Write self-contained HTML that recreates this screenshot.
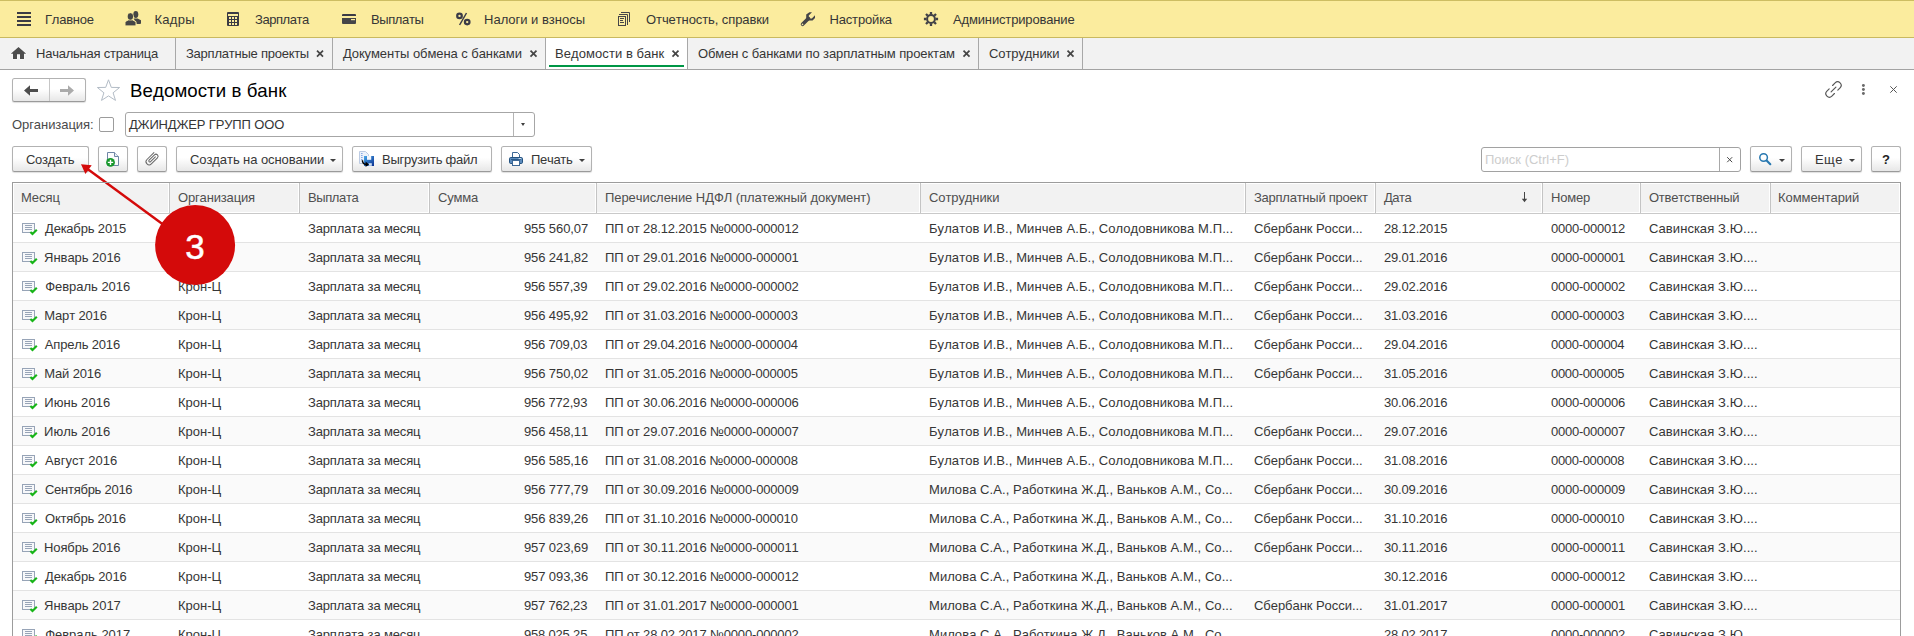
<!DOCTYPE html>
<html lang="ru"><head><meta charset="utf-8"><title>Ведомости в банк</title>
<style>
html,body{margin:0;padding:0;background:#fff;}
body{font-kerning:none;width:1914px;height:636px;overflow:hidden;font-family:"Liberation Sans",sans-serif;font-size:13px;color:#333;}
#app{position:relative;width:1914px;height:636px;overflow:hidden;background:#fff;}
.t{position:absolute;white-space:nowrap;font-size:13px;line-height:15px;color:#363636;}
svg{position:absolute;display:block;overflow:visible;}
/* top bar */
#topbar{position:absolute;left:0;top:0;width:1914px;height:38px;background:#fbec9e;box-sizing:border-box;border-top:1px solid #cdbd62;border-bottom:1px solid #c9b960;}

/* tabs */
#tabbar{position:absolute;left:0;top:38px;width:1914px;height:32px;background:#f2f2f2;box-sizing:border-box;border-bottom:1px solid #a3a3a3;}
.tsep{position:absolute;top:0;width:1px;height:31px;background:#a8a8a8;}
#tabact{position:absolute;left:546px;top:0;width:141px;height:31px;background:#fff;}
#tabline{position:absolute;left:549px;top:27px;width:135px;height:2px;background:#009646;}
.tx{position:absolute;width:7px;height:7px;}
/* buttons */
.btn{position:absolute;box-sizing:border-box;height:26px;border:1px solid #b2b2b2;border-bottom-color:#9a9a9a;border-radius:2.5px;background:linear-gradient(#ffffff 0%,#ffffff 45%,#e7e7e7 100%);box-shadow:0 1px 1px rgba(0,0,0,.13);}
.inp{position:absolute;box-sizing:border-box;border:1px solid #a6a6a6;border-radius:3px;background:#fff;}
.tri{position:absolute;width:0;height:0;border-left:3px solid transparent;border-right:3px solid transparent;border-top:3px solid #3f3f3f;}
/* grid */
#grid{position:absolute;left:12px;top:182px;width:1889px;height:454px;background:#fff;overflow:hidden;}
#gbl,#gbr{position:absolute;top:0;width:1px;height:454px;background:#9c9c9c;z-index:3;}
#gbl{left:0}#gbr{left:1888px}
#gbt{position:absolute;left:0;top:0;width:1889px;height:1px;background:#9c9c9c;z-index:3;}
#ghl{position:absolute;left:1px;top:31px;width:1887px;height:1px;background:#c9c9c9;}
#ghead{position:absolute;left:2px;top:2px;width:1885px;height:28px;background:#f2f2f2;}
#grid .hsep{position:absolute;top:1px;width:2px;height:30px;background:linear-gradient(90deg,#ffffff 50%,#c4c4c4 50%);}
.hd{color:#4f4f4f;}
.row{position:absolute;left:0;width:1889px;height:28px;border-bottom:1px solid #e3e3e3;background:#fff;}
.row.alt{background:#fafafa;}


</style></head><body>
<div id="app">
<div id="topbar"></div>
<!-- hamburger -->
<svg style="left:17px;top:12px" width="14" height="14" viewBox="17 12 14 14"><path d="M17 13h14M17 17h14M17 21h14M17 25h14" stroke="#3b3b45" stroke-width="2"/></svg>
<!-- people -->
<svg style="left:122px;top:9px" width="22" height="20" viewBox="122 9 22 20">
<ellipse cx="135.8" cy="14.5" rx="2.5" ry="3.4" fill="#454545"/>
<path d="M133.6 18.4L137.6 18.4L141 20.2L141 23Q141 23.9 140.1 23.9L136.6 23.9Z" fill="#454545"/>
<ellipse cx="130.4" cy="16.5" rx="2.7" ry="3.4" fill="#454545" stroke="#fbec9e" stroke-width="1"/>
<path d="M128.2 19.9L132.6 19.9L136 21.7L136 25Q136 25.9 135.1 25.9L125.9 25.9Q125 25.9 125 25L125 21.7Z" fill="#454545" stroke="#fbec9e" stroke-width="1"/>
<ellipse cx="130.4" cy="16.5" rx="2.6" ry="3.3" fill="#454545"/>
</svg>
<!-- calculator -->
<svg style="left:227px;top:12px" width="12" height="14" viewBox="227 12 12 14"><rect x="227" y="12" width="12" height="14" rx="1" fill="#3b3b45"/><rect x="228" y="14" width="10" height="2" fill="#fbec9e"/>
<g fill="#fbec9e"><rect x="229" y="17" width="2" height="2"/><rect x="232" y="17" width="2" height="2"/><rect x="235" y="17" width="2" height="2"/><rect x="229" y="20" width="2" height="2"/><rect x="232" y="20" width="2" height="2"/><rect x="235" y="20" width="2" height="2"/><rect x="229" y="23" width="2" height="2"/><rect x="232" y="23" width="2" height="2"/><rect x="235" y="23" width="2" height="2"/></g></svg>
<!-- card -->
<svg style="left:342px;top:14px" width="14" height="10" viewBox="342 14 14 10"><path d="M342 16V15Q342 14 343 14H355Q356 14 356 15V16Z" fill="#3b3b45"/><path d="M342 18H356V23Q356 24 355 24H343Q342 24 342 23Z" fill="#454548"/><rect x="351" y="19" width="4" height="1.2" fill="#fbec9e"/></svg>
<!-- percent -->
<svg style="left:455px;top:12px" width="16" height="14" viewBox="455 12 16 14"><g fill="none" stroke="#3b3b47"><ellipse cx="459.5" cy="15.9" rx="2.3" ry="2.2" stroke-width="2.2"/><ellipse cx="467.2" cy="22.1" rx="2.3" ry="2.2" stroke-width="2.2"/><path d="M466.5 13L459.6 25" stroke-width="1.5"/></g></svg>
<!-- documents -->
<svg style="left:617px;top:11px" width="15" height="16" viewBox="617 11 15 16"><g fill="none" stroke="#454548" stroke-width="1"><rect x="618.5" y="16.5" width="7" height="9"/><path d="M620 18.5H624M620 20.5H623M620 22.5H624"/><path d="M619 14.5H627.5V25"/><path d="M621 12.5H629.5V22"/></g></svg>
<!-- wrench -->
<svg style="left:799px;top:10px" width="18" height="18" viewBox="799 10 18 18"><path d="M802.6 24.3L808.4 18.5" stroke="#454548" stroke-width="3.7" stroke-linecap="round" fill="none"/><path d="M806.2 19.8L806.2 14.6L809.4 12.2L812 12.2L808.8 15.4L808.8 17L810.2 18.4L811.8 18.4L815 15.2L815 18L812.6 20.6L808 20.6Z" fill="#454548"/><circle cx="802.5" cy="24.4" r="0.8" fill="#fbec9e"/></svg>
<!-- gear -->
<svg style="left:922px;top:10px" width="18" height="18" viewBox="922 10 18 18"><g fill="none" stroke="#414147"><circle cx="931" cy="19" r="3.9" stroke-width="2"/><path d="M935.60 19.00L938.10 19.00M934.25 22.25L936.02 24.02M931.00 23.60L931.00 26.10M927.75 22.25L925.98 24.02M926.40 19.00L923.90 19.00M927.75 15.75L925.98 13.98M931.00 14.40L931.00 11.90M934.25 15.75L936.02 13.98" stroke-width="2.3"/></g></svg>
<span class="t" style="left:45.1px;top:12px;letter-spacing:-0.267px;">Главное</span>
<span class="t" style="left:154.46px;top:12px;letter-spacing:0.28px;">Кадры</span>
<span class="t" style="left:255px;top:12px;letter-spacing:-0.453px;">Зарплата</span>
<span class="t" style="left:371px;top:12px;letter-spacing:-0.398px;">Выплаты</span>
<span class="t" style="left:484.1px;top:12px;letter-spacing:-0.007px;">Налоги и взносы</span>
<span class="t" style="left:646px;top:12px;letter-spacing:-0.091px;">Отчетность, справки</span>
<span class="t" style="left:829.46px;top:12px;letter-spacing:-0.16px;">Настройка</span>
<span class="t" style="left:953px;top:12px;letter-spacing:-0.15px;">Администрирование</span>
<div id="tabbar">
<div id="tabact"></div><div id="tabline"></div>
<div class="tsep" style="left:175px"></div><div class="tsep" style="left:332px"></div><div class="tsep" style="left:545px"></div><div class="tsep" style="left:687px"></div><div class="tsep" style="left:978px"></div><div class="tsep" style="left:1082px"></div>
</div>
<!-- home -->
<svg style="left:9px;top:45px" width="19" height="16" viewBox="9 45 19 16"><path d="M18.5 47L26.2 53.8L24 53.8L24 59L20 59L20 54.2L17 54.2L17 59L13 59L13 53.8L10.8 53.8Z" fill="#4e4e4e" stroke="#fafafa" stroke-width="1.2" paint-order="stroke"/></svg>
<span class="t" style="left:36px;top:46px;letter-spacing:-0.229px;">Начальная страница</span>
<span class="t" style="left:186px;top:46px;letter-spacing:-0.235px;">Зарплатные проекты</span>
<span class="t" style="left:343px;top:46px;letter-spacing:-0.06px;">Документы обмена с банками</span>
<span class="t" style="left:555.1px;top:46px;letter-spacing:0.057px;">Ведомости в банк</span>
<span class="t" style="left:698px;top:46px;letter-spacing:-0.108px;">Обмен с банками по зарплатным проектам</span>
<span class="t" style="left:989px;top:46px;letter-spacing:-0.091px;">Сотрудники</span>
<svg style="left:0;top:38px" width="1100" height="32" viewBox="0 38 1100 32"><g stroke="#454545" stroke-width="1.7" fill="none">
<path d="M317 50.6l6 6m0-6l-6 6"/><path d="M530.5 50.6l6 6m0-6l-6 6"/><path d="M672.5 50.6l6 6m0-6l-6 6"/><path d="M963.5 50.6l6 6m0-6l-6 6"/><path d="M1067.5 50.6l6 6m0-6l-6 6"/></g></svg>
<!-- nav buttons -->
<div class="btn" style="left:12px;top:78px;width:74px;height:24px"></div>
<div style="position:absolute;left:49px;top:79px;width:1px;height:22px;background:#c6c6c6"></div>
<svg style="left:20px;top:82px" width="60" height="18" viewBox="20 82 60 18"><path d="M24 90.5L30 85.2V89H38V92H30V95.8Z" fill="#4d4d4d"/><path d="M74 90.5L68 85.2V89H60V92H68V95.8Z" fill="#ababab"/></svg>
<!-- star -->
<svg style="left:95px;top:77px" width="28" height="26" viewBox="95 77 28 26"><path d="M108.5 79.8L111.3 87.4L119.6 87.5L113.1 92.8L115.5 100.4L108.5 95.9L101.5 100.4L103.9 92.8L97.4 87.5L105.7 87.4Z" fill="#fff" stroke="#b3bcc6" stroke-width="1" stroke-linejoin="miter"/></svg>
<span class="t" id="title" style="left:130.1px;top:80px;letter-spacing:0.06px;font-size:18.67px;line-height:22px;color:#000;letter-spacing:0.057px;">Ведомости в банк</span>
<!-- title right icons -->
<svg style="left:1820px;top:78px" width="90" height="24" viewBox="1820 78 90 24">
<g transform="translate(1833.5 89.5) rotate(-45)" fill="none" stroke="#555" stroke-width="1.15" stroke-linecap="round"><path d="M2.2 -3.5H5.8A3.5 3.5 0 0 1 5.8 3.5H2.6"/><path d="M-2.2 3.5H-5.8A3.5 3.5 0 0 1 -5.8 -3.5H-2.6"/><path d="M-3.4 0H3.4"/></g>
<g fill="#6a6a6a"><circle cx="1863.4" cy="85.5" r="1.45"/><circle cx="1863.4" cy="89.5" r="1.45"/><circle cx="1863.4" cy="93.5" r="1.45"/></g>
<path d="M1890.3 86.3l6.4 6.4m0-6.4l-6.4 6.4" stroke="#555" stroke-width="1" fill="none"/>
</svg>
<!-- organisation row -->
<span class="t" style="left:12px;top:117px;color:#4a4a4a;letter-spacing:-0.071px;">Организация:</span>
<div class="inp" style="left:99px;top:117px;width:15px;height:15px;border-radius:2px;border-color:#9c9c9c"></div>
<div class="inp" style="left:125px;top:112px;width:410px;height:25px"></div>
<div style="position:absolute;left:513px;top:113px;width:1px;height:23px;background:#b4b4b4"></div>
<div class="tri" style="left:521px;top:123px;border-left-width:2.5px;border-right-width:2.5px"></div>
<span class="t" style="left:128.9px;top:117px;letter-spacing:-0.15px;">ДЖИНДЖЕР ГРУПП ООО</span>

<!-- toolbar -->
<div class="btn" style="left:12px;top:146px;width:77px"></div><span class="t" style="left:26px;top:152px;letter-spacing:-0.27px;">Создать</span>
<div class="btn" style="left:98px;top:146px;width:30px"></div>
<svg style="left:104px;top:150px" width="18" height="19" viewBox="104 150 18 19"><path d="M107.5 152.5H114.5L118.5 156.5V165.5H107.5Z" fill="#fbfcfd" stroke="#6f86a6" stroke-width="1"/><path d="M114.5 152.5V156.5H118.5" fill="#e9eef5" stroke="#6f86a6" stroke-width="1"/><circle cx="110.5" cy="162.4" r="4.4" fill="#16972b"/><path d="M110.5 159.7V165.1M107.8 162.4H113.2" stroke="#fff" stroke-width="1.4"/></svg>
<div class="btn" style="left:137px;top:146px;width:30px"></div>
<svg style="left:143px;top:149px" width="18" height="19" viewBox="143 149 18 19"><g transform="translate(152 158.6) rotate(-45)" fill="none" stroke="#666" stroke-width="1" stroke-linecap="round"><path d="M5.6 -2.9H-4.2A3.1 3.1 0 0 0 -4.2 3.3H4.4A2.1 2.1 0 0 0 4.4 -0.9H-3.2A1 1 0 0 0 -3.2 1.2H3.6"/></g></svg>
<div class="btn" style="left:176px;top:146px;width:167px"></div><span class="t" style="left:190px;top:152px;letter-spacing:-0.077px;">Создать на основании</span><div class="tri" style="left:330px;top:159px"></div>
<div class="btn" style="left:352px;top:146px;width:140px"></div>
<svg style="left:358px;top:150px" width="18" height="18" viewBox="358 150 18 18"><defs><linearGradient id="fl" x1="0" y1="0" x2="1" y2="1"><stop offset="0" stop-color="#49a7ea"/><stop offset="1" stop-color="#0a2f8f"/></linearGradient></defs>
<path d="M359.5 151.5H365.5L368.5 154.5V163.5H359.5Z" fill="#edf2fa" stroke="#bccbe3" stroke-width="1"/><path d="M361 153.5h1.6M361 155.5h1.6M361 157.5h1.6M361 159.5h1.6" stroke="#86aae6" stroke-width="1"/>
<rect x="364" y="156" width="10" height="10" fill="url(#fl)"/><rect x="367" y="156" width="4.2" height="3.8" fill="#f2f7fd"/><rect x="368.6" y="163.2" width="3.2" height="2.6" fill="#cfe0f3"/>
<path d="M362.4 160.2Q362.6 164.2 366 164.3" fill="none" stroke="#000" stroke-width="1.5"/><path d="M365.6 161.6L369 164.4L365.6 167.1Z" fill="#000"/></svg>
<span class="t" style="left:382px;top:152px;letter-spacing:-0.244px;">Выгрузить файл</span>
<div class="btn" style="left:501px;top:146px;width:91px"></div>
<svg style="left:508px;top:151px" width="16" height="16" viewBox="508 151 16 16"><path d="M512.5 157.5V152.5H517.5L519.5 154.5V157.5" fill="#fff" stroke="#3d6896" stroke-width="1"/><rect x="509.5" y="157.5" width="13" height="6" rx="1.2" fill="#5d8cbd" stroke="#24527f" stroke-width="1"/><path d="M511 159.5H521" stroke="#2b5a89" stroke-width="1"/><rect x="518.6" y="158.2" width="2.6" height="0.9" fill="#e8f0f8"/><rect x="512.5" y="160.5" width="7" height="5" fill="#fff" stroke="#3d6896" stroke-width="1"/></svg>
<span class="t" style="left:531px;top:152px;letter-spacing:-0.32px;">Печать</span><div class="tri" style="left:579px;top:159px"></div>

<div class="inp" style="left:1481px;top:147px;width:260px;height:25px;border-color:#a2a2a2"></div>
<div style="position:absolute;left:1719px;top:148px;width:1px;height:23px;background:#a8a8a8"></div>
<svg style="left:1725px;top:155px" width="10" height="10" viewBox="1725 155 10 10"><path d="M1727.2 157.2l5 5m0-5l-5 5" stroke="#4a4a4a" stroke-width="1" fill="none"/></svg>
<span class="t" style="left:1485px;top:152px;color:#cdcdcd">Поиск (Ctrl+F)</span>
<div class="btn" style="left:1750px;top:146px;width:42px"></div>
<svg style="left:1757px;top:151px" width="16" height="16" viewBox="1757 151 16 16"><circle cx="1763.6" cy="157.5" r="3.8" fill="none" stroke="#2878b0" stroke-width="1.5"/><path d="M1766.6 160.5L1770.3 164.2" stroke="#2878b0" stroke-width="2.1" stroke-linecap="round"/></svg>
<div class="tri" style="left:1779px;top:159px"></div>
<div class="btn" style="left:1801px;top:146px;width:61px"></div><span class="t" style="left:1815px;top:152px;letter-spacing:0.4px;">Еще</span><div class="tri" style="left:1849px;top:159px"></div>
<div class="btn" style="left:1871px;top:146px;width:30px"></div><span class="t" style="left:1882px;top:152px;font-weight:bold;color:#222">?</span>
<div id="grid">
<div id="gbl"></div><div id="gbr"></div><div id="gbt"></div><div id="ghead"></div><div id="ghl"></div>
<div class="hsep" style="left:156px"></div>
<div class="hsep" style="left:286px"></div>
<div class="hsep" style="left:416px"></div>
<div class="hsep" style="left:583px"></div>
<div class="hsep" style="left:907px"></div>
<div class="hsep" style="left:1232px"></div>
<div class="hsep" style="left:1362px"></div>
<div class="hsep" style="left:1529px"></div>
<div class="hsep" style="left:1627px"></div>
<div class="hsep" style="left:1757px"></div>
<span id="h0" class="t hd" style="left:9px;top:8px;">Месяц</span>
<span id="h1" class="t hd" style="left:166px;top:8px;letter-spacing:-0.16px;">Организация</span>
<span id="h2" class="t hd" style="left:296px;top:8px;letter-spacing:-0.398px;">Выплата</span>
<span id="h3" class="t hd" style="left:426px;top:8px;letter-spacing:-0.2px;">Сумма</span>
<span id="h4" class="t hd" style="left:593px;top:8px;letter-spacing:-0.065px;">Перечисление НДФЛ (платежный документ)</span>
<span id="h5" class="t hd" style="left:917px;top:8px;letter-spacing:-0.091px;">Сотрудники</span>
<span id="h6" class="t hd" style="left:1242px;top:8px;letter-spacing:-0.25px;">Зарплатный проект</span>
<span id="h7" class="t hd" style="left:1372px;top:8px;letter-spacing:-0.53px;">Дата</span>
<span id="h8" class="t hd" style="left:1539px;top:8px;letter-spacing:-0.2px;">Номер</span>
<span id="h9" class="t hd" style="left:1637px;top:8px;letter-spacing:-0.265px;">Ответственный</span>
<span id="h10" class="t hd" style="left:1766.1px;top:8px;letter-spacing:-0.08px;">Комментарий</span>
<svg style="left:1508px;top:8px" width="10" height="14" viewBox="1520 190 10 14"><path d="M1524.5 192V200" stroke="#444" stroke-width="1" fill="none"/><path d="M1521.8 198.8H1527.2L1524.5 202.2Z" fill="#444"/></svg>

<div class="row" style="top:32px">
<svg style="left:9px;top:8px" width="18" height="14" viewBox="21 222 18 14"><rect x="22.5" y="223.5" width="12" height="9" fill="#f7f8fa" stroke="#97a4b7" stroke-width="1"/><path d="M25 225.5h7M25 227.5h7M25 229.5h7" stroke="#97a4b7" stroke-width="1"/><path d="M30.4 231.9L32.5 234L36.8 229.7" fill="none" stroke="#17b517" stroke-width="2.1"/></svg>

<span class="t c0" style="left:33px;top:7px;letter-spacing:-0.149px;">Декабрь 2015</span>
<span class="t c1" style="left:166px;top:7px;">Крон-Ц</span>
<span class="t c2" style="left:296px;top:7px;letter-spacing:-0.15px;">Зарплата за месяц</span>
<span class="t c3" style="left:511.9px;top:7px;letter-spacing:-0.085px;">955 560,07</span>
<span class="t c4" style="left:593px;top:7px;letter-spacing:-0.166px;">ПП от 28.12.2015 №0000-000012</span>
<span class="t c5b" style="left:917px;top:7px;letter-spacing:0.083px;">Булатов И.В., Минчев А.Б., Солодовникова М.П...</span>
<span class="t c6" style="left:1242px;top:7px;letter-spacing:-0.05px;">Сбербанк Росси...</span>
<span class="t c7" style="left:1372px;top:7px;letter-spacing:-0.18px;">28.12.2015</span>
<span class="t c8" style="left:1539px;top:7px;letter-spacing:-0.24px;">0000-000012</span>
<span class="t c9" style="left:1637px;top:7px;letter-spacing:0.1px;">Савинская З.Ю....</span>
</div>
<div class="row alt" style="top:61px">
<svg style="left:9px;top:8px" width="18" height="14" viewBox="21 222 18 14"><rect x="22.5" y="223.5" width="12" height="9" fill="#f7f8fa" stroke="#97a4b7" stroke-width="1"/><path d="M25 225.5h7M25 227.5h7M25 229.5h7" stroke="#97a4b7" stroke-width="1"/><path d="M30.4 231.9L32.5 234L36.8 229.7" fill="none" stroke="#17b517" stroke-width="2.1"/></svg>

<span class="t c0" style="left:32.1px;top:7px;letter-spacing:-0.048px;">Январь 2016</span>
<span class="t c1" style="left:166px;top:7px;">Крон-Ц</span>
<span class="t c2" style="left:296px;top:7px;letter-spacing:-0.15px;">Зарплата за месяц</span>
<span class="t c3" style="left:511.9px;top:7px;letter-spacing:-0.085px;">956 241,82</span>
<span class="t c4" style="left:593px;top:7px;letter-spacing:-0.166px;">ПП от 29.01.2016 №0000-000001</span>
<span class="t c5b" style="left:917px;top:7px;letter-spacing:0.083px;">Булатов И.В., Минчев А.Б., Солодовникова М.П...</span>
<span class="t c6" style="left:1242px;top:7px;letter-spacing:-0.05px;">Сбербанк Росси...</span>
<span class="t c7" style="left:1372px;top:7px;letter-spacing:-0.18px;">29.01.2016</span>
<span class="t c8" style="left:1539px;top:7px;letter-spacing:-0.24px;">0000-000001</span>
<span class="t c9" style="left:1637px;top:7px;letter-spacing:0.1px;">Савинская З.Ю....</span>
</div>
<div class="row" style="top:90px">
<svg style="left:9px;top:8px" width="18" height="14" viewBox="21 222 18 14"><rect x="22.5" y="223.5" width="12" height="9" fill="#f7f8fa" stroke="#97a4b7" stroke-width="1"/><path d="M25 225.5h7M25 227.5h7M25 229.5h7" stroke="#97a4b7" stroke-width="1"/><path d="M30.4 231.9L32.5 234L36.8 229.7" fill="none" stroke="#17b517" stroke-width="2.1"/></svg>

<span class="t c0" style="left:33.18px;top:7px;letter-spacing:-0.026px;">Февраль 2016</span>
<span class="t c1" style="left:166px;top:7px;">Крон-Ц</span>
<span class="t c2" style="left:296px;top:7px;letter-spacing:-0.15px;">Зарплата за месяц</span>
<span class="t c3" style="left:511.9px;top:7px;letter-spacing:-0.174px;">956 557,39</span>
<span class="t c4" style="left:593px;top:7px;letter-spacing:-0.166px;">ПП от 29.02.2016 №0000-000002</span>
<span class="t c5b" style="left:917px;top:7px;letter-spacing:0.083px;">Булатов И.В., Минчев А.Б., Солодовникова М.П...</span>
<span class="t c6" style="left:1242px;top:7px;letter-spacing:-0.05px;">Сбербанк Росси...</span>
<span class="t c7" style="left:1372px;top:7px;letter-spacing:-0.18px;">29.02.2016</span>
<span class="t c8" style="left:1539px;top:7px;letter-spacing:-0.24px;">0000-000002</span>
<span class="t c9" style="left:1637px;top:7px;letter-spacing:0.1px;">Савинская З.Ю....</span>
</div>
<div class="row alt" style="top:119px">
<svg style="left:9px;top:8px" width="18" height="14" viewBox="21 222 18 14"><rect x="22.5" y="223.5" width="12" height="9" fill="#f7f8fa" stroke="#97a4b7" stroke-width="1"/><path d="M25 225.5h7M25 227.5h7M25 229.5h7" stroke="#97a4b7" stroke-width="1"/><path d="M30.4 231.9L32.5 234L36.8 229.7" fill="none" stroke="#17b517" stroke-width="2.1"/></svg>

<span class="t c0" style="left:32.28px;top:7px;letter-spacing:-0.14px;">Март 2016</span>
<span class="t c1" style="left:166px;top:7px;">Крон-Ц</span>
<span class="t c2" style="left:296px;top:7px;letter-spacing:-0.15px;">Зарплата за месяц</span>
<span class="t c3" style="left:511.9px;top:7px;letter-spacing:-0.085px;">956 495,92</span>
<span class="t c4" style="left:593px;top:7px;letter-spacing:-0.195px;">ПП от 31.03.2016 №0000-000003</span>
<span class="t c5b" style="left:917px;top:7px;letter-spacing:0.083px;">Булатов И.В., Минчев А.Б., Солодовникова М.П...</span>
<span class="t c6" style="left:1242px;top:7px;letter-spacing:-0.05px;">Сбербанк Росси...</span>
<span class="t c7" style="left:1372px;top:7px;letter-spacing:-0.18px;">31.03.2016</span>
<span class="t c8" style="left:1539px;top:7px;letter-spacing:-0.32px;">0000-000003</span>
<span class="t c9" style="left:1637px;top:7px;letter-spacing:0.1px;">Савинская З.Ю....</span>
</div>
<div class="row" style="top:148px">
<svg style="left:9px;top:8px" width="18" height="14" viewBox="21 222 18 14"><rect x="22.5" y="223.5" width="12" height="9" fill="#f7f8fa" stroke="#97a4b7" stroke-width="1"/><path d="M25 225.5h7M25 227.5h7M25 229.5h7" stroke="#97a4b7" stroke-width="1"/><path d="M30.4 231.9L32.5 234L36.8 229.7" fill="none" stroke="#17b517" stroke-width="2.1"/></svg>

<span class="t c0" style="left:32.82px;top:7px;letter-spacing:-0.176px;">Апрель 2016</span>
<span class="t c1" style="left:166px;top:7px;">Крон-Ц</span>
<span class="t c2" style="left:296px;top:7px;letter-spacing:-0.15px;">Зарплата за месяц</span>
<span class="t c3" style="left:511.9px;top:7px;letter-spacing:-0.174px;">956 709,03</span>
<span class="t c4" style="left:593px;top:7px;letter-spacing:-0.194px;">ПП от 29.04.2016 №0000-000004</span>
<span class="t c5b" style="left:917px;top:7px;letter-spacing:0.083px;">Булатов И.В., Минчев А.Б., Солодовникова М.П...</span>
<span class="t c6" style="left:1242px;top:7px;letter-spacing:-0.05px;">Сбербанк Росси...</span>
<span class="t c7" style="left:1372px;top:7px;letter-spacing:-0.18px;">29.04.2016</span>
<span class="t c8" style="left:1539px;top:7px;letter-spacing:-0.32px;">0000-000004</span>
<span class="t c9" style="left:1637px;top:7px;letter-spacing:0.1px;">Савинская З.Ю....</span>
</div>
<div class="row alt" style="top:177px">
<svg style="left:9px;top:8px" width="18" height="14" viewBox="21 222 18 14"><rect x="22.5" y="223.5" width="12" height="9" fill="#f7f8fa" stroke="#97a4b7" stroke-width="1"/><path d="M25 225.5h7M25 227.5h7M25 229.5h7" stroke="#97a4b7" stroke-width="1"/><path d="M30.4 231.9L32.5 234L36.8 229.7" fill="none" stroke="#17b517" stroke-width="2.1"/></svg>

<span class="t c0" style="left:32.28px;top:7px;letter-spacing:-0.14px;">Май 2016</span>
<span class="t c1" style="left:166px;top:7px;">Крон-Ц</span>
<span class="t c2" style="left:296px;top:7px;letter-spacing:-0.15px;">Зарплата за месяц</span>
<span class="t c3" style="left:511.9px;top:7px;letter-spacing:-0.085px;">956 750,02</span>
<span class="t c4" style="left:593px;top:7px;letter-spacing:-0.195px;">ПП от 31.05.2016 №0000-000005</span>
<span class="t c5b" style="left:917px;top:7px;letter-spacing:0.083px;">Булатов И.В., Минчев А.Б., Солодовникова М.П...</span>
<span class="t c6" style="left:1242px;top:7px;letter-spacing:-0.05px;">Сбербанк Росси...</span>
<span class="t c7" style="left:1372px;top:7px;letter-spacing:-0.18px;">31.05.2016</span>
<span class="t c8" style="left:1539px;top:7px;letter-spacing:-0.32px;">0000-000005</span>
<span class="t c9" style="left:1637px;top:7px;letter-spacing:0.1px;">Савинская З.Ю....</span>
</div>
<div class="row" style="top:206px">
<svg style="left:9px;top:8px" width="18" height="14" viewBox="21 222 18 14"><rect x="22.5" y="223.5" width="12" height="9" fill="#f7f8fa" stroke="#97a4b7" stroke-width="1"/><path d="M25 225.5h7M25 227.5h7M25 229.5h7" stroke="#97a4b7" stroke-width="1"/><path d="M30.4 231.9L32.5 234L36.8 229.7" fill="none" stroke="#17b517" stroke-width="2.1"/></svg>

<span class="t c0" style="left:32.28px;top:7px;letter-spacing:0.04px;">Июнь 2016</span>
<span class="t c1" style="left:166px;top:7px;">Крон-Ц</span>
<span class="t c2" style="left:296px;top:7px;letter-spacing:-0.15px;">Зарплата за месяц</span>
<span class="t c3" style="left:511.9px;top:7px;letter-spacing:-0.174px;">956 772,93</span>
<span class="t c4" style="left:593px;top:7px;letter-spacing:-0.166px;">ПП от 30.06.2016 №0000-000006</span>
<span class="t c5b" style="left:917px;top:7px;letter-spacing:0.083px;">Булатов И.В., Минчев А.Б., Солодовникова М.П...</span>
<span class="t c7" style="left:1372px;top:7px;letter-spacing:-0.18px;">30.06.2016</span>
<span class="t c8" style="left:1539px;top:7px;letter-spacing:-0.24px;">0000-000006</span>
<span class="t c9" style="left:1637px;top:7px;letter-spacing:0.1px;">Савинская З.Ю....</span>
</div>
<div class="row alt" style="top:235px">
<svg style="left:9px;top:8px" width="18" height="14" viewBox="21 222 18 14"><rect x="22.5" y="223.5" width="12" height="9" fill="#f7f8fa" stroke="#97a4b7" stroke-width="1"/><path d="M25 225.5h7M25 227.5h7M25 229.5h7" stroke="#97a4b7" stroke-width="1"/><path d="M30.4 231.9L32.5 234L36.8 229.7" fill="none" stroke="#17b517" stroke-width="2.1"/></svg>

<span class="t c0" style="left:32.1px;top:7px;letter-spacing:0.02px;">Июль 2016</span>
<span class="t c1" style="left:166px;top:7px;">Крон-Ц</span>
<span class="t c2" style="left:296px;top:7px;letter-spacing:-0.15px;">Зарплата за месяц</span>
<span class="t c3" style="left:511.9px;top:7px;letter-spacing:-0.085px;">956 458,11</span>
<span class="t c4" style="left:593px;top:7px;letter-spacing:-0.166px;">ПП от 29.07.2016 №0000-000007</span>
<span class="t c5b" style="left:917px;top:7px;letter-spacing:0.083px;">Булатов И.В., Минчев А.Б., Солодовникова М.П...</span>
<span class="t c6" style="left:1242px;top:7px;letter-spacing:-0.05px;">Сбербанк Росси...</span>
<span class="t c7" style="left:1372px;top:7px;letter-spacing:-0.18px;">29.07.2016</span>
<span class="t c8" style="left:1539px;top:7px;letter-spacing:-0.24px;">0000-000007</span>
<span class="t c9" style="left:1637px;top:7px;letter-spacing:0.1px;">Савинская З.Ю....</span>
</div>
<div class="row" style="top:264px">
<svg style="left:9px;top:8px" width="18" height="14" viewBox="21 222 18 14"><rect x="22.5" y="223.5" width="12" height="9" fill="#f7f8fa" stroke="#97a4b7" stroke-width="1"/><path d="M25 225.5h7M25 227.5h7M25 229.5h7" stroke="#97a4b7" stroke-width="1"/><path d="M30.4 231.9L32.5 234L36.8 229.7" fill="none" stroke="#17b517" stroke-width="2.1"/></svg>

<span class="t c0" style="left:33px;top:7px;letter-spacing:0.048px;">Август 2016</span>
<span class="t c1" style="left:166px;top:7px;">Крон-Ц</span>
<span class="t c2" style="left:296px;top:7px;letter-spacing:-0.15px;">Зарплата за месяц</span>
<span class="t c3" style="left:511.9px;top:7px;letter-spacing:-0.085px;">956 585,16</span>
<span class="t c4" style="left:593px;top:7px;letter-spacing:-0.195px;">ПП от 31.08.2016 №0000-000008</span>
<span class="t c5b" style="left:917px;top:7px;letter-spacing:0.083px;">Булатов И.В., Минчев А.Б., Солодовникова М.П...</span>
<span class="t c6" style="left:1242px;top:7px;letter-spacing:-0.05px;">Сбербанк Росси...</span>
<span class="t c7" style="left:1372px;top:7px;letter-spacing:-0.18px;">31.08.2016</span>
<span class="t c8" style="left:1539px;top:7px;letter-spacing:-0.32px;">0000-000008</span>
<span class="t c9" style="left:1637px;top:7px;letter-spacing:0.1px;">Савинская З.Ю....</span>
</div>
<div class="row alt" style="top:293px">
<svg style="left:9px;top:8px" width="18" height="14" viewBox="21 222 18 14"><rect x="22.5" y="223.5" width="12" height="9" fill="#f7f8fa" stroke="#97a4b7" stroke-width="1"/><path d="M25 225.5h7M25 227.5h7M25 229.5h7" stroke="#97a4b7" stroke-width="1"/><path d="M30.4 231.9L32.5 234L36.8 229.7" fill="none" stroke="#17b517" stroke-width="2.1"/></svg>

<span class="t c0" style="left:33px;top:7px;letter-spacing:-0.266px;">Сентябрь 2016</span>
<span class="t c1" style="left:166px;top:7px;">Крон-Ц</span>
<span class="t c2" style="left:296px;top:7px;letter-spacing:-0.15px;">Зарплата за месяц</span>
<span class="t c3" style="left:511.9px;top:7px;letter-spacing:-0.085px;">956 777,79</span>
<span class="t c4" style="left:593px;top:7px;letter-spacing:-0.166px;">ПП от 30.09.2016 №0000-000009</span>
<span class="t c5m" style="left:917px;top:7px;letter-spacing:0.064px;">Милова С.А., Работкина Ж.Д., Ваньков А.М., Со...</span>
<span class="t c6" style="left:1242px;top:7px;letter-spacing:-0.05px;">Сбербанк Росси...</span>
<span class="t c7" style="left:1372px;top:7px;letter-spacing:-0.18px;">30.09.2016</span>
<span class="t c8" style="left:1539px;top:7px;letter-spacing:-0.24px;">0000-000009</span>
<span class="t c9" style="left:1637px;top:7px;letter-spacing:0.1px;">Савинская З.Ю....</span>
</div>
<div class="row" style="top:322px">
<svg style="left:9px;top:8px" width="18" height="14" viewBox="21 222 18 14"><rect x="22.5" y="223.5" width="12" height="9" fill="#f7f8fa" stroke="#97a4b7" stroke-width="1"/><path d="M25 225.5h7M25 227.5h7M25 229.5h7" stroke="#97a4b7" stroke-width="1"/><path d="M30.4 231.9L32.5 234L36.8 229.7" fill="none" stroke="#17b517" stroke-width="2.1"/></svg>

<span class="t c0" style="left:33px;top:7px;letter-spacing:-0.172px;">Октябрь 2016</span>
<span class="t c1" style="left:166px;top:7px;">Крон-Ц</span>
<span class="t c2" style="left:296px;top:7px;letter-spacing:-0.15px;">Зарплата за месяц</span>
<span class="t c3" style="left:511.9px;top:7px;letter-spacing:-0.085px;">956 839,26</span>
<span class="t c4" style="left:593px;top:7px;letter-spacing:-0.195px;">ПП от 31.10.2016 №0000-000010</span>
<span class="t c5m" style="left:917px;top:7px;letter-spacing:0.064px;">Милова С.А., Работкина Ж.Д., Ваньков А.М., Со...</span>
<span class="t c6" style="left:1242px;top:7px;letter-spacing:-0.05px;">Сбербанк Росси...</span>
<span class="t c7" style="left:1372px;top:7px;letter-spacing:-0.18px;">31.10.2016</span>
<span class="t c8" style="left:1539px;top:7px;letter-spacing:-0.32px;">0000-000010</span>
<span class="t c9" style="left:1637px;top:7px;letter-spacing:0.1px;">Савинская З.Ю....</span>
</div>
<div class="row alt" style="top:351px">
<svg style="left:9px;top:8px" width="18" height="14" viewBox="21 222 18 14"><rect x="22.5" y="223.5" width="12" height="9" fill="#f7f8fa" stroke="#97a4b7" stroke-width="1"/><path d="M25 225.5h7M25 227.5h7M25 229.5h7" stroke="#97a4b7" stroke-width="1"/><path d="M30.4 231.9L32.5 234L36.8 229.7" fill="none" stroke="#17b517" stroke-width="2.1"/></svg>

<span class="t c0" style="left:32.1px;top:7px;letter-spacing:-0.128px;">Ноябрь 2016</span>
<span class="t c1" style="left:166px;top:7px;">Крон-Ц</span>
<span class="t c2" style="left:296px;top:7px;letter-spacing:-0.15px;">Зарплата за месяц</span>
<span class="t c3" style="left:511.9px;top:7px;letter-spacing:-0.085px;">957 023,69</span>
<span class="t c4" style="left:593px;top:7px;letter-spacing:-0.166px;">ПП от 30.11.2016 №0000-000011</span>
<span class="t c5m" style="left:917px;top:7px;letter-spacing:0.064px;">Милова С.А., Работкина Ж.Д., Ваньков А.М., Со...</span>
<span class="t c6" style="left:1242px;top:7px;letter-spacing:-0.05px;">Сбербанк Росси...</span>
<span class="t c7" style="left:1372px;top:7px;letter-spacing:-0.18px;">30.11.2016</span>
<span class="t c8" style="left:1539px;top:7px;letter-spacing:-0.24px;">0000-000011</span>
<span class="t c9" style="left:1637px;top:7px;letter-spacing:0.1px;">Савинская З.Ю....</span>
</div>
<div class="row" style="top:380px">
<svg style="left:9px;top:8px" width="18" height="14" viewBox="21 222 18 14"><rect x="22.5" y="223.5" width="12" height="9" fill="#f7f8fa" stroke="#97a4b7" stroke-width="1"/><path d="M25 225.5h7M25 227.5h7M25 229.5h7" stroke="#97a4b7" stroke-width="1"/><path d="M30.4 231.9L32.5 234L36.8 229.7" fill="none" stroke="#17b517" stroke-width="2.1"/></svg>

<span class="t c0" style="left:33px;top:7px;letter-spacing:-0.099px;">Декабрь 2016</span>
<span class="t c1" style="left:166px;top:7px;">Крон-Ц</span>
<span class="t c2" style="left:296px;top:7px;letter-spacing:-0.15px;">Зарплата за месяц</span>
<span class="t c3" style="left:511.9px;top:7px;letter-spacing:-0.085px;">957 093,36</span>
<span class="t c4" style="left:593px;top:7px;letter-spacing:-0.166px;">ПП от 30.12.2016 №0000-000012</span>
<span class="t c5m" style="left:917px;top:7px;letter-spacing:0.064px;">Милова С.А., Работкина Ж.Д., Ваньков А.М., Со...</span>
<span class="t c7" style="left:1372px;top:7px;letter-spacing:-0.18px;">30.12.2016</span>
<span class="t c8" style="left:1539px;top:7px;letter-spacing:-0.24px;">0000-000012</span>
<span class="t c9" style="left:1637px;top:7px;letter-spacing:0.1px;">Савинская З.Ю....</span>
</div>
<div class="row alt" style="top:409px">
<svg style="left:9px;top:8px" width="18" height="14" viewBox="21 222 18 14"><rect x="22.5" y="223.5" width="12" height="9" fill="#f7f8fa" stroke="#97a4b7" stroke-width="1"/><path d="M25 225.5h7M25 227.5h7M25 229.5h7" stroke="#97a4b7" stroke-width="1"/><path d="M30.4 231.9L32.5 234L36.8 229.7" fill="none" stroke="#17b517" stroke-width="2.1"/></svg>

<span class="t c0" style="left:32.1px;top:7px;letter-spacing:-0.048px;">Январь 2017</span>
<span class="t c1" style="left:166px;top:7px;">Крон-Ц</span>
<span class="t c2" style="left:296px;top:7px;letter-spacing:-0.15px;">Зарплата за месяц</span>
<span class="t c3" style="left:511.9px;top:7px;letter-spacing:-0.174px;">957 762,23</span>
<span class="t c4" style="left:593px;top:7px;letter-spacing:-0.166px;">ПП от 31.01.2017 №0000-000001</span>
<span class="t c5m" style="left:917px;top:7px;letter-spacing:0.064px;">Милова С.А., Работкина Ж.Д., Ваньков А.М., Со...</span>
<span class="t c6" style="left:1242px;top:7px;letter-spacing:-0.05px;">Сбербанк Росси...</span>
<span class="t c7" style="left:1372px;top:7px;letter-spacing:-0.18px;">31.01.2017</span>
<span class="t c8" style="left:1539px;top:7px;letter-spacing:-0.24px;">0000-000001</span>
<span class="t c9" style="left:1637px;top:7px;letter-spacing:0.1px;">Савинская З.Ю....</span>
</div>
<div class="row" style="top:438px">
<svg style="left:9px;top:8px" width="18" height="14" viewBox="21 222 18 14"><rect x="22.5" y="223.5" width="12" height="9" fill="#f7f8fa" stroke="#97a4b7" stroke-width="1"/><path d="M25 225.5h7M25 227.5h7M25 229.5h7" stroke="#97a4b7" stroke-width="1"/><path d="M30.4 231.9L32.5 234L36.8 229.7" fill="none" stroke="#17b517" stroke-width="2.1"/></svg>

<span class="t c0" style="left:33.18px;top:7px;letter-spacing:-0.026px;">Февраль 2017</span>
<span class="t c1" style="left:166px;top:7px;">Крон-Ц</span>
<span class="t c2" style="left:296px;top:7px;letter-spacing:-0.15px;">Зарплата за месяц</span>
<span class="t c3" style="left:511.9px;top:7px;letter-spacing:-0.174px;">958 025,25</span>
<span class="t c4" style="left:593px;top:7px;letter-spacing:-0.166px;">ПП от 28.02.2017 №0000-000002</span>
<span class="t c5m" style="left:917px;top:7px;letter-spacing:0.064px;">Милова С.А., Работкина Ж.Д., Ваньков А.М., Со...</span>
<span class="t c7" style="left:1372px;top:7px;letter-spacing:-0.18px;">28.02.2017</span>
<span class="t c8" style="left:1539px;top:7px;letter-spacing:-0.24px;">0000-000002</span>
<span class="t c9" style="left:1637px;top:7px;letter-spacing:0.1px;">Савинская З.Ю....</span>
</div>
</div><svg style="left:0;top:0" width="1914" height="636" viewBox="0 0 1914 636">
<line x1="84.5" y1="166.8" x2="190" y2="244.3" stroke="#d40a0a" stroke-width="2.4"/>
<polygon points="81,164.2 91.7,165.2 85.4,174" fill="#d40a0a"/>
<circle cx="195.1" cy="245" r="40" fill="#d40a0a"/>
<text x="195" y="259" text-anchor="middle" font-family="Liberation Sans, sans-serif" font-size="35" fill="#fff" stroke="#fff" stroke-width="0.5">3</text>
</svg>

</div>
</body></html>
